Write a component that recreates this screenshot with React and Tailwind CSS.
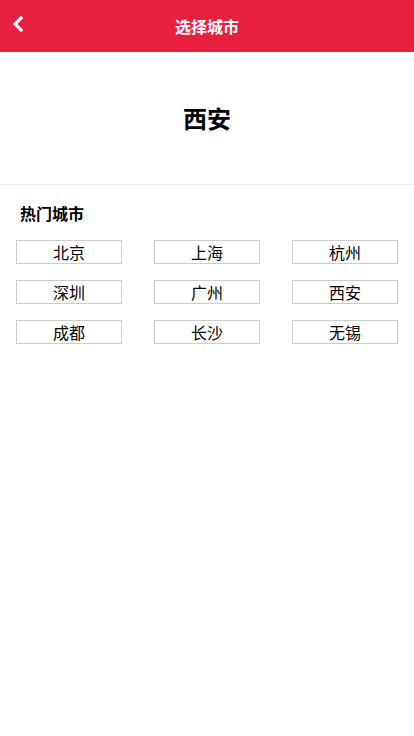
import React from "react";

const HOT_CITIES = ["北京", "上海", "杭州", "深圳", "广州", "西安", "成都", "长沙", "无锡"];

const App = () => {
  return (
    <div
      className="min-h-screen bg-white text-black"
      style={{ fontFamily: '"Noto Sans CJK SC", "Noto Sans", sans-serif' }}
    >
      {/* Header */}
      <div className="relative h-[52px] bg-[#e82040] flex items-center justify-center">
        <button className="absolute left-[10px] top-[16px] w-4 h-4 flex items-center justify-center">
          <svg width="12" height="16" viewBox="0 0 12 16" fill="none">
            <polyline
              points="9,2 3,8 9,14"
              stroke="white"
              strokeWidth="3.2"
              strokeLinecap="square"
            />
          </svg>
        </button>
        <h1 className="text-white text-base font-bold">选择城市</h1>
      </div>

      {/* Current city */}
      <div className="h-[133px] flex items-center justify-center border-b border-[#eeeeee]">
        <span className="text-2xl font-bold">西安</span>
      </div>

      {/* Hot cities */}
      <div className="px-4 pt-4">
        <h3 className="pl-1 text-base font-bold leading-6">热门城市</h3>
        <div className="mt-[15px] grid grid-cols-3 gap-x-8 gap-y-4">
          {HOT_CITIES.map((city) => (
            <div
              key={city}
              className="h-6 border border-[#cccccc] flex items-center justify-center text-base leading-[22px]"
            >
              {city}
            </div>
          ))}
        </div>
      </div>
    </div>
  );
};

export default App;
